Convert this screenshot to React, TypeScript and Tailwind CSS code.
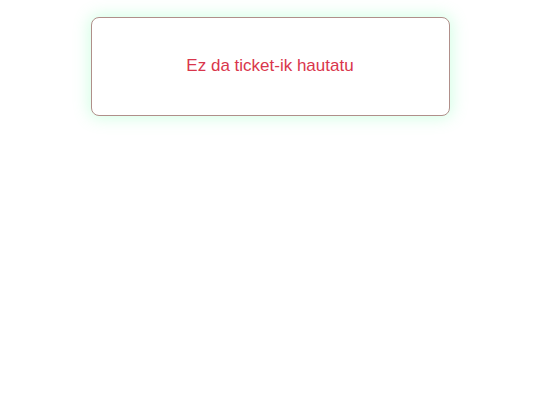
export default function App() {
  return (
    <div className="min-h-screen bg-white pt-[17px] font-['Liberation_Sans',Arial,sans-serif]">
      <div className="mx-auto flex h-[99px] w-[359px] items-center justify-center rounded-lg border border-[#b08f8a] bg-white pb-[2px] shadow-[0_0_16px_2px_rgba(110,255,170,0.3)]">
        <p className="text-[17px] text-[#d9364c]">Ez da ticket-ik hautatu</p>
      </div>
    </div>
  );
}
